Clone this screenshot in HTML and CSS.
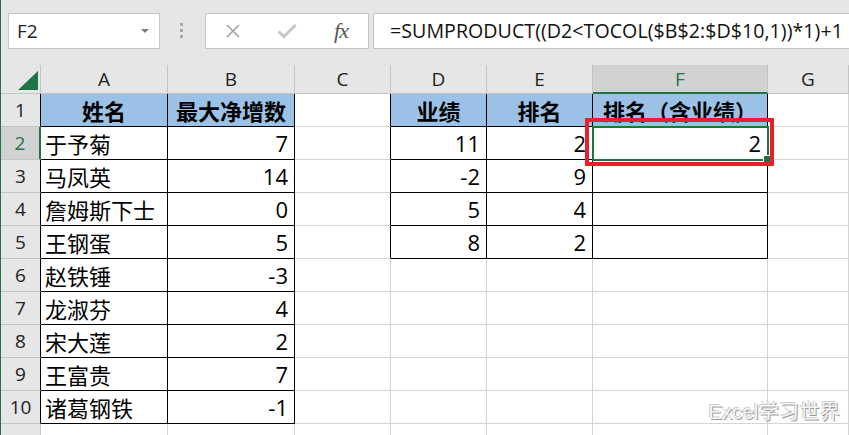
FILE: index.html
```html
<!DOCTYPE html>
<html lang="zh-CN">
<head>
    <meta charset="UTF-8">
    <meta name="viewport" content="width=device-width, initial-scale=1.0">
    <title>排名（含业绩）</title>
    <link rel="stylesheet" href="styles.css">
</head>
<body>
<div class="app">
    <div class="formula-bar">
        <div class="name-box">
            <span>F2</span>
            <span class="caret"></span>
        </div>
        <div class="grip"><i></i><i></i><i></i></div>
        <div class="fx-buttons">
            <span class="btn">
                <svg width="16" height="16" viewBox="0 0 16 16"><path d="M2 2 L14 14 M14 2 L2 14" stroke="#a3a3a3" stroke-width="1.6" fill="none"/></svg>
            </span>
            <span class="btn">
                <svg width="20" height="16" viewBox="0 0 20 16"><path d="M1.5 8.5 L7 13.5 L18.5 2" stroke="#c6c6c6" stroke-width="3" fill="none"/></svg>
            </span>
            <span class="btn fx">fx</span>
        </div>
        <div class="formula">=SUMPRODUCT((D2&lt;TOCOL($B$2:$D$10,1))*1)+1</div>
    </div>

    <div class="sheet">
        <!-- column headers -->
        <div class="corner">
            <svg width="20" height="19" viewBox="0 0 20 19"><polygon points="20,0 20,19 0,19" fill="#217346"/></svg>
        </div>
        <div class="col-head">A</div>
        <div class="col-head">B</div>
        <div class="col-head">C</div>
        <div class="col-head">D</div>
        <div class="col-head">E</div>
        <div class="col-head active">F</div>
        <div class="col-head">G</div>

        <!-- row 1 -->
        <div class="row-head edge">1</div>
        <div class="cell b title">姓名</div>
        <div class="cell b title">最大净增数</div>
        <div class="cell edge"></div>
        <div class="cell b title">业绩</div>
        <div class="cell b title">排名</div>
        <div class="cell b title">排名（含业绩）</div>
        <div class="cell"></div>

        <!-- row 2 -->
        <div class="row-head active">2</div>
        <div class="cell b">于予菊</div>
        <div class="cell b num">7</div>
        <div class="cell edge"></div>
        <div class="cell b num">11</div>
        <div class="cell b num">2</div>
        <div class="cell b num selected">2</div>
        <div class="cell"></div>

        <!-- row 3 -->
        <div class="row-head edge">3</div>
        <div class="cell b">马凤英</div>
        <div class="cell b num">14</div>
        <div class="cell edge"></div>
        <div class="cell b num">-2</div>
        <div class="cell b num">9</div>
        <div class="cell b"></div>
        <div class="cell"></div>

        <!-- row 4 -->
        <div class="row-head edge">4</div>
        <div class="cell b">詹姆斯下士</div>
        <div class="cell b num">0</div>
        <div class="cell edge"></div>
        <div class="cell b num">5</div>
        <div class="cell b num">4</div>
        <div class="cell b"></div>
        <div class="cell"></div>

        <!-- row 5 -->
        <div class="row-head edge">5</div>
        <div class="cell b">王钢蛋</div>
        <div class="cell b num">5</div>
        <div class="cell edge"></div>
        <div class="cell b num">8</div>
        <div class="cell b num">2</div>
        <div class="cell b"></div>
        <div class="cell"></div>

        <!-- row 6 -->
        <div class="row-head edge">6</div>
        <div class="cell b">赵铁锤</div>
        <div class="cell b num">-3</div>
        <div class="cell"></div>
        <div class="cell"></div>
        <div class="cell"></div>
        <div class="cell"></div>
        <div class="cell"></div>

        <!-- row 7 -->
        <div class="row-head edge">7</div>
        <div class="cell b">龙淑芬</div>
        <div class="cell b num">4</div>
        <div class="cell"></div>
        <div class="cell"></div>
        <div class="cell"></div>
        <div class="cell"></div>
        <div class="cell"></div>

        <!-- row 8 -->
        <div class="row-head edge">8</div>
        <div class="cell b">宋大莲</div>
        <div class="cell b num">2</div>
        <div class="cell"></div>
        <div class="cell"></div>
        <div class="cell"></div>
        <div class="cell"></div>
        <div class="cell"></div>

        <!-- row 9 -->
        <div class="row-head edge">9</div>
        <div class="cell b">王富贵</div>
        <div class="cell b num">7</div>
        <div class="cell"></div>
        <div class="cell"></div>
        <div class="cell"></div>
        <div class="cell"></div>
        <div class="cell"></div>

        <!-- row 10 -->
        <div class="row-head edge">10</div>
        <div class="cell b">诸葛钢铁</div>
        <div class="cell b num">-1</div>
        <div class="cell"></div>
        <div class="cell"></div>
        <div class="cell"></div>
        <div class="cell"></div>
        <div class="cell"></div>

        <!-- row 11 (cut off) -->
        <div class="row-head"></div>
        <div class="cell"></div>
        <div class="cell"></div>
        <div class="cell"></div>
        <div class="cell"></div>
        <div class="cell"></div>
        <div class="cell"></div>
        <div class="cell"></div>

        <div class="mark"></div>
    </div>

    <div class="watermark">Excel学习世界</div>
</div>
</body>
</html>
```

FILE: styles.css
```css
body {
    margin: 0;
    padding: 0;
    background-color: #ffffff;
    font-family: "Open Sans", "Noto Sans CJK SC", sans-serif;
    color: #000000;
    overflow: hidden;
}
.app {
    position: relative;
    height: 435px;
    border-left: 1px solid #217346;
    overflow: hidden;
}

/* formula bar */
.formula-bar {
    display: flex;
    align-items: flex-start;
    height: 65px;
    padding-top: 13px;
    box-sizing: border-box;
    background-color: #e6e6e6;
}
.name-box {
    display: flex;
    align-items: center;
    justify-content: space-between;
    width: 152px;
    height: 36px;
    margin-left: 7px;
    padding: 0 10px 0 8px;
    box-sizing: border-box;
    background-color: #ffffff;
    border: 1px solid #c6c6c6;
    font-size: 19px;
    color: #222222;
}
.caret {
    width: 0;
    height: 0;
    border-left: 4px solid transparent;
    border-right: 4px solid transparent;
    border-top: 4px solid #7a7a7a;
}
.grip {
    display: flex;
    flex-direction: column;
    gap: 3px;
    margin: 10px 22px 0 20px;
}
.grip i {
    width: 3px;
    height: 3px;
    background-color: #a6a6a6;
}
.fx-buttons {
    display: flex;
    width: 164px;
    height: 36px;
    box-sizing: border-box;
    background-color: #ffffff;
    border: 1px solid #c6c6c6;
}
.btn {
    display: flex;
    align-items: center;
    justify-content: center;
    width: 54px;
}
.fx {
    font-family: "Liberation Serif", serif;
    font-style: italic;
    font-size: 22px;
    color: #555555;
    letter-spacing: -1px;
}
.formula {
    flex: 1;
    height: 36px;
    margin-left: 4px;
    padding-left: 16px;
    box-sizing: border-box;
    background-color: #ffffff;
    border: 1px solid #c6c6c6;
    border-right: none;
    font-size: 19.6px;
    letter-spacing: 0.05px;
    line-height: 34px;
    color: #111111;
    white-space: nowrap;
}

/* grid */
.sheet {
    position: relative;
    display: grid;
    grid-template-columns: 40px 127px 127px 96px 96px 106px 175px 1fr;
    grid-template-rows: 29px repeat(11, 33px);
}
.corner, .col-head, .row-head {
    display: flex;
    align-items: center;
    justify-content: center;
    box-sizing: border-box;
    background-color: #e6e6e6;
    border-right: 1px solid #c4c4c4;
    border-bottom: 1px solid #c4c4c4;
    font-size: 19px;
    color: #222222;
}
.corner {
    align-items: flex-end;
    justify-content: flex-end;
    padding: 0 2px 3px 0;
}
.col-head.active {
    background-color: #d2d2d2;
    color: #217346;
    border-bottom: 2px solid #217346;
}
.row-head.active {
    background-color: #d2d2d2;
    color: #217346;
    border-right: 2px solid #217346;
}
.cell {
    display: flex;
    align-items: center;
    padding: 0 4px;
    box-sizing: border-box;
    border-right: 1px solid #d4d4d4;
    border-bottom: 1px solid #d4d4d4;
    font-size: 22px;
    white-space: nowrap;
    overflow: hidden;
}
.cell.b {
    border-right-color: #000000;
    border-bottom-color: #000000;
}
.edge {
    border-right-color: #000000;
}
.title {
    justify-content: center;
    background-color: #9bc2e6;
    font-weight: bold;
}
.num {
    justify-content: flex-end;
    padding-right: 6px;
}
.selected {
    position: relative;
    overflow: visible;
    z-index: 2;
    outline: 2px solid #217346;
    outline-offset: -1px;
}
.selected::after {
    content: "";
    position: absolute;
    right: -4px;
    bottom: -4px;
    width: 6px;
    height: 6px;
    background-color: #217346;
    border: 1px solid #ffffff;
}
.mark {
    position: absolute;
    left: 584px;
    top: 53px;
    width: 189px;
    height: 48px;
    box-sizing: border-box;
    border: 4px solid #e8202a;
    z-index: 3;
}
.watermark {
    position: absolute;
    right: 9px;
    bottom: 10px;
    font-family: "Liberation Sans", "Noto Sans CJK SC", sans-serif;
    font-size: 20px;
    letter-spacing: 0.3px;
    color: #f4f4f4;
    text-shadow: 1px 1px 0 #9a9a9a, -1px -1px 0 #d0d0d0;
}
```
